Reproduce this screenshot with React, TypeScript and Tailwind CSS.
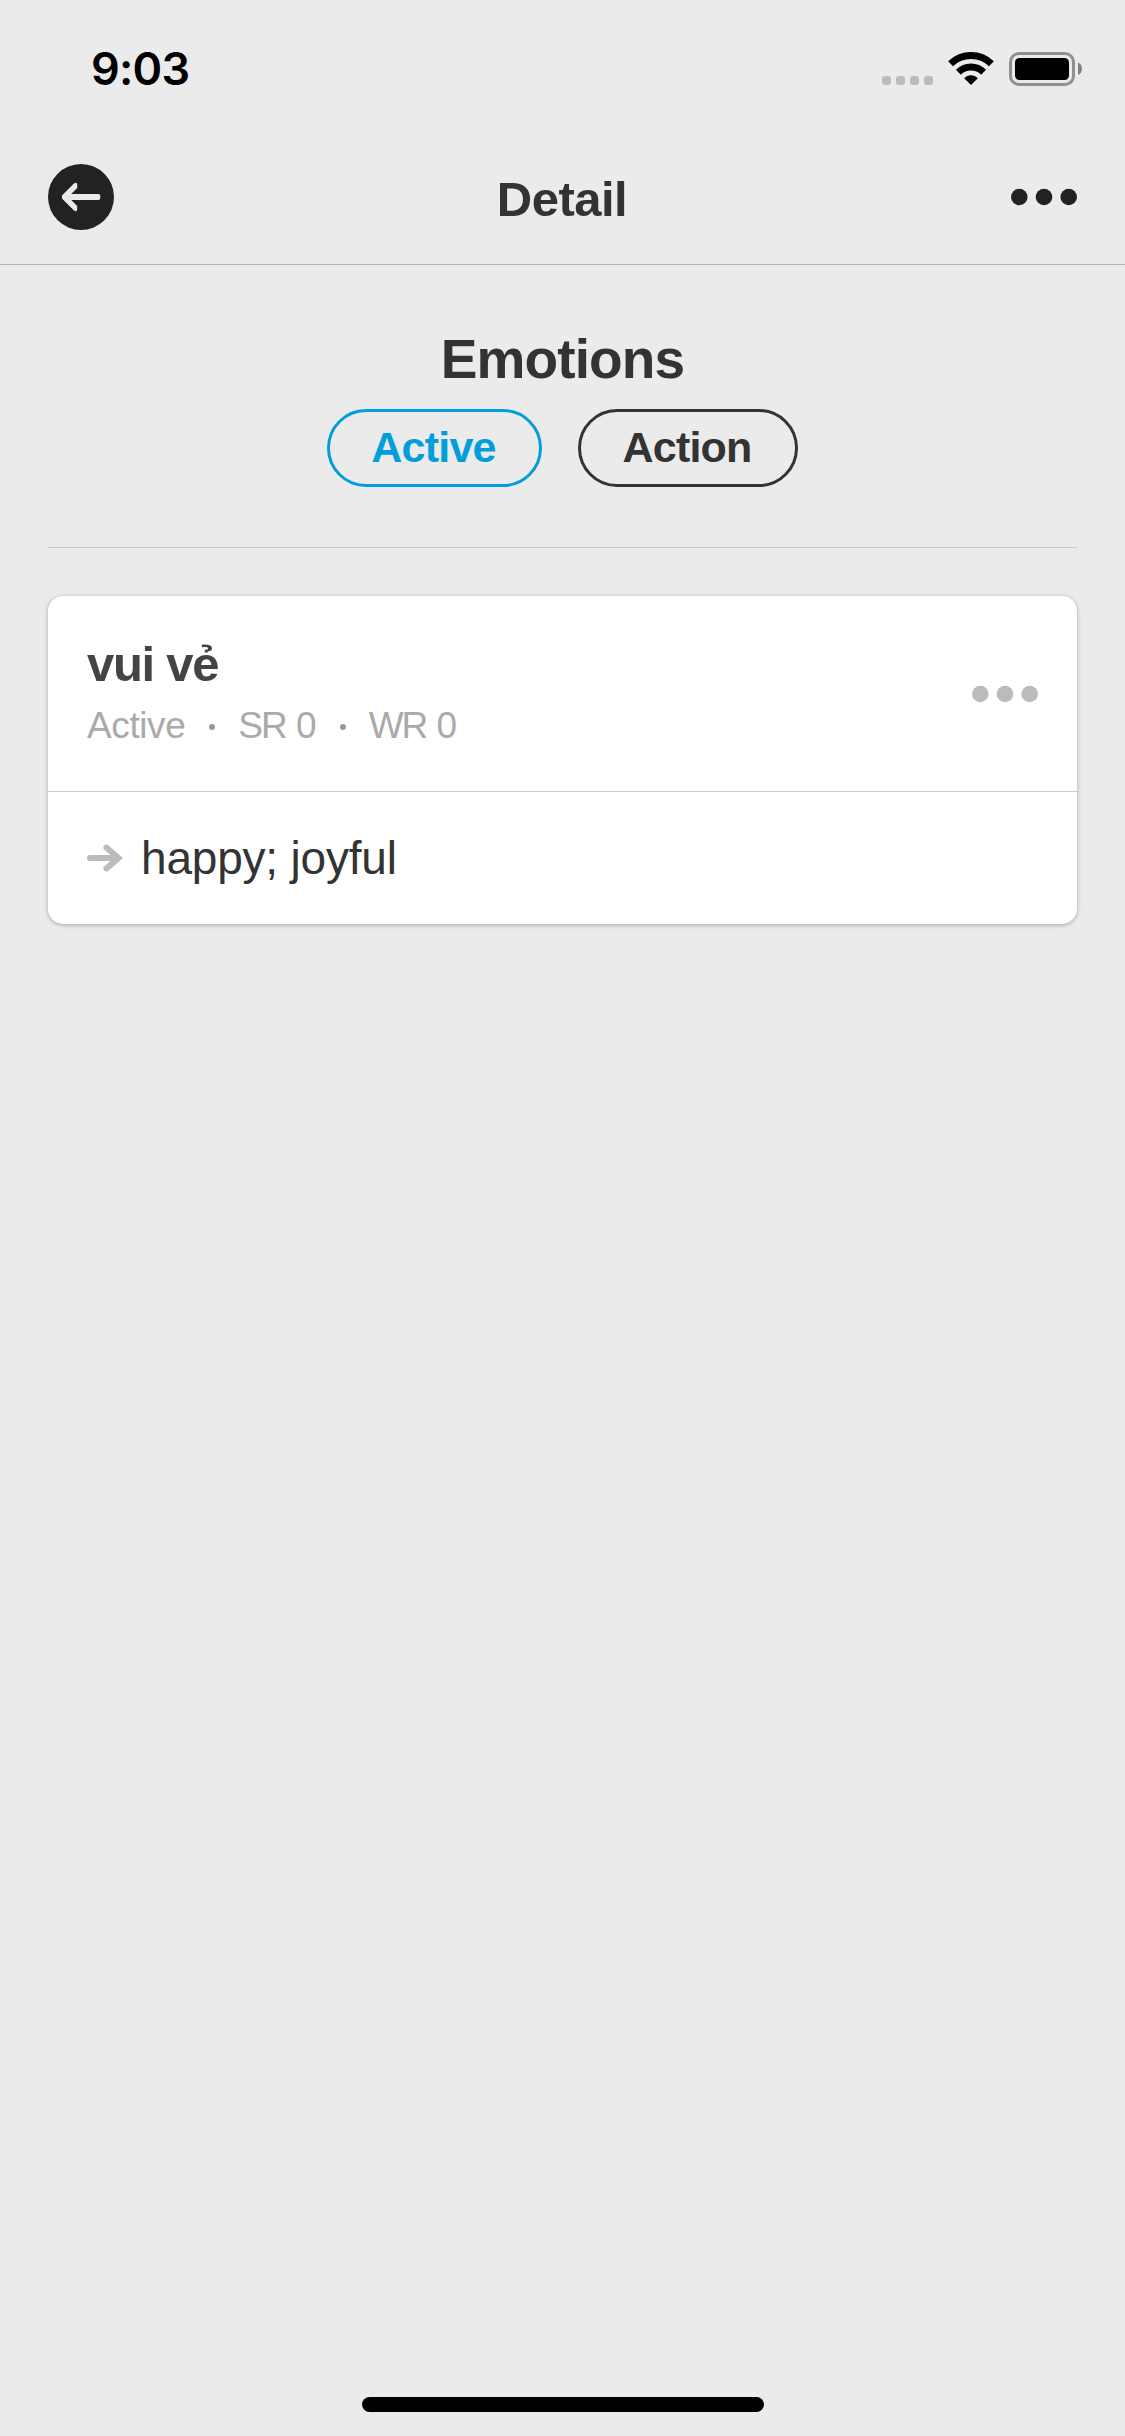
type DotsProps = { className: string };

function MoreDots({ className }: DotsProps) {
  return (
    <svg viewBox="0 0 66 18" className={className} fill="currentColor" aria-hidden="true">
      <circle cx="8.3" cy="9" r="8.3" />
      <circle cx="33" cy="9" r="8.3" />
      <circle cx="57.7" cy="9" r="8.3" />
    </svg>
  );
}

function WifiIcon() {
  return (
    <svg viewBox="0 0 46 33" className="h-[33px] w-[46px]" fill="none" stroke="#000" aria-hidden="true">
      <path d="M2.6 11.8C14 .8 32 .8 43.4 11.8" strokeWidth="7" />
      <path d="M10.4 20.2C17.5 13.4 28.5 13.4 35.6 20.2" strokeWidth="7" />
      <path d="M23 33 16.2 26.2C20 22.2 26 22.2 29.8 26.2Z" fill="#000" stroke="none" />
    </svg>
  );
}

function BatteryIcon() {
  return (
    <svg viewBox="0 0 73 34" className="h-[34px] w-[73px]" aria-hidden="true">
      <rect x="1.5" y="1.5" width="63" height="31" rx="8.5" fill="none" stroke="#909090" strokeWidth="3" />
      <rect x="6" y="6" width="54" height="22" rx="4.5" fill="#000" />
      <path d="M69 10.6C74.3 12.6 74.3 20.9 69 22.9Z" fill="#808080" />
    </svg>
  );
}

function StatusBar() {
  return (
    <div className="flex h-[130px] items-start justify-between pr-[43px] pl-[91px]">
      <div className="mt-[42px] font-['Inter'] text-[45px] leading-[54px] font-semibold tracking-[-0.8px] text-black">
        9:03
      </div>
      <div className="mt-[52px] flex items-start">
        <div className="mt-6 mr-[15px] flex gap-[5px]">
          {[0, 1, 2, 3].map((dot) => (
            <span key={dot} className="size-[9px] rounded-[3px] bg-[#bcbcbc]" />
          ))}
        </div>
        <WifiIcon />
        <div className="ml-[15px]">
          <BatteryIcon />
        </div>
      </div>
    </div>
  );
}

function Header() {
  return (
    <header className="grid h-[135px] grid-cols-3 items-center border-b border-[#b4b4b4] px-12">
      <button className="flex size-[66px] items-center justify-center rounded-full bg-[#222222]" aria-label="Back">
        <svg viewBox="0 0 66 66" className="size-[66px]" aria-hidden="true">
          <path
            d="M26 19.4C27.8 18.2 29.2 19 29.2 20.5V24L23.2 30H50.5Q52.3 30 52.3 31.8V34.2Q52.3 36 50.5 36H23.2L29.2 42V45.5C29.2 47 27.8 47.8 26 46.6L14.4 34.9Q13 33 14.4 31.1Z"
            fill="#ebebeb"
          />
        </svg>
      </button>
      <h1 className="pt-[4px] pr-[1px] text-center text-[49px] leading-[58px] font-bold tracking-[-0.5px] text-[#333333]">
        Detail
      </h1>
      <button className="justify-self-end" aria-label="More">
        <MoreDots className="block h-[18px] w-[66px] text-[#222222]" />
      </button>
    </header>
  );
}

function WordCard() {
  return (
    <article className="mt-12 rounded-[15px] bg-white shadow-[0_1px_4px_rgba(0,0,0,0.3)]">
      <div className="flex h-[196px] items-center justify-between border-b border-[#cccccc] px-[39px]">
        <div>
          <h3 className="text-[49px] leading-[58px] font-bold tracking-[-1.3px] text-[#444444]">vui vẻ</h3>
          <div className="mt-[6px] flex h-[54px] items-center text-[37px] leading-[56px] tracking-[-0.4px] text-[#aaaaaa]">
            <span>Active</span>
            <span className="mr-[23px] ml-6 mt-[2px] size-[6px] rounded-full bg-[#999999]" />
            <span className="tracking-[-2px] [word-spacing:2px]">SR 0</span>
            <span className="mr-[23px] ml-[25px] mt-[2px] size-[6px] rounded-full bg-[#999999]" />
            <span className="tracking-[-2px] [word-spacing:2px]">WR 0</span>
          </div>
        </div>
        <MoreDots className="block h-[18px] w-[66px] text-[#bbbbbb]" />
      </div>
      <div className="flex h-[132px] items-center px-[39px]">
        <svg viewBox="0 0 36 28" className="mr-[18px] h-7 w-9" fill="none" stroke="#bbbbbb" strokeWidth="6" strokeLinecap="round" aria-hidden="true">
          <path d="M3 14H29M19.4 3.6 31.4 14 19.4 24.4" strokeLinejoin="miter" />
        </svg>
        <p className="text-[46px] leading-[54px] tracking-[-0.2px] text-[#333333]">happy; joyful</p>
      </div>
    </article>
  );
}

export default function App() {
  return (
    <div className="flex h-[2436px] w-[1125px] flex-col bg-[#ebebeb] font-['Liberation_Sans',sans-serif]">
      <StatusBar />
      <Header />
      <main className="flex-1 px-12">
        <section className="flex flex-col items-center border-b border-[#c8c8c8] pt-[61px] pb-[60px]">
          <h2 className="text-[55px] leading-[66px] font-bold tracking-[-0.9px] text-[#333333]">Emotions</h2>
          <div className="mt-[17px] flex gap-9">
            <span className="flex h-[78px] w-[215px] items-center justify-center rounded-full border-[3px] border-[#009fdb] pr-[2px] pb-[2px] text-[43px] leading-none font-bold tracking-[-0.8px] text-[#009fdb]">
              Active
            </span>
            <span className="flex h-[78px] w-[220px] items-center justify-center rounded-full border-[3px] border-[#333333] pr-[2px] pb-[2px] text-[43px] leading-none font-bold tracking-[-0.8px] text-[#333333]">
              Action
            </span>
          </div>
        </section>
        <WordCard />
      </main>
      <div className="mx-auto mb-6 h-[15px] w-[402px] rounded-full bg-black" />
    </div>
  );
}
